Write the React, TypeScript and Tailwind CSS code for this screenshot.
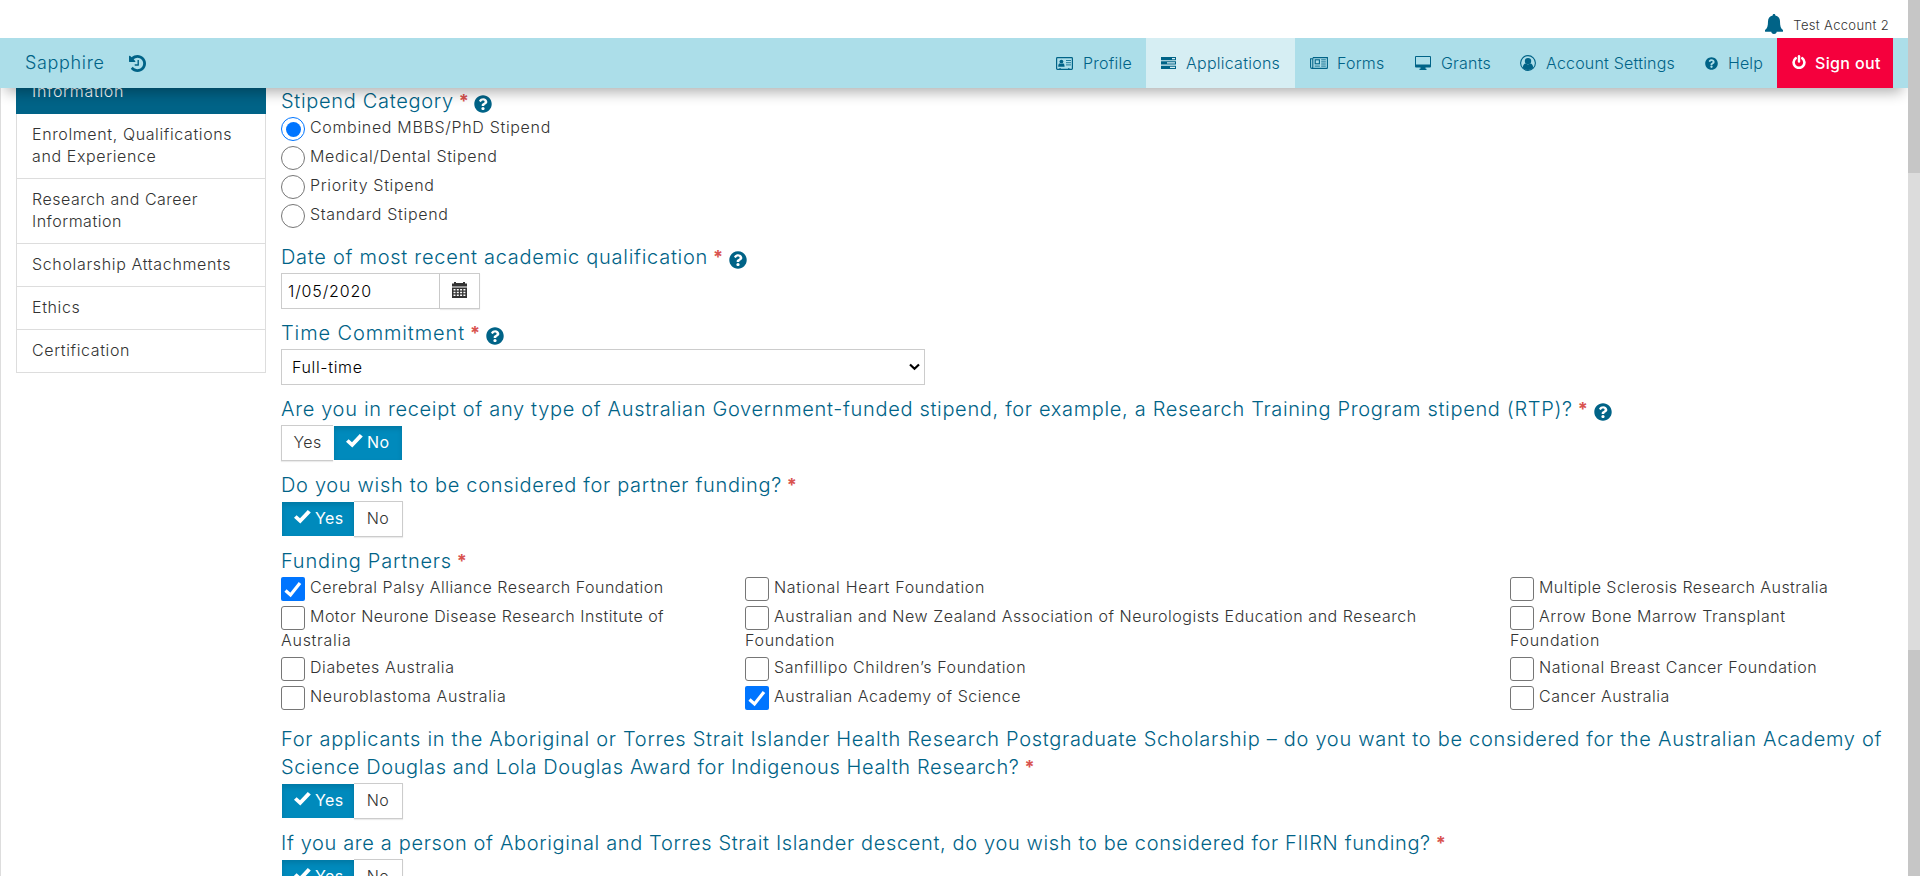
import React from "react";
import { FaQuestionCircle } from "react-icons/fa";

function BellIcon() {
  return (
    <svg width="18" height="20" viewBox="0 0 18 20" className="mt-3.5 shrink-0">
      <path
        fill="#006387"
        d="M9 0c.8 0 1.300.5 1.300 1.200v.3C13.300 2 15 4.200 15 7.500c0 4.500.8 7 3 8.500v1.200q0 .6-.6.6H.6q-.6 0-.6-.6V16c2.200-1.500 3-4 3-8.500C3 4.200 4.700 2 7.700 1.500v-.3C7.700.5 8.200 0 9 0zM6.300 17.500h5.400a2.700 2.400 0 0 1-5.400 0z"
      />
    </svg>
  );
}

function HistoryIcon() {
  return (
    <svg width="17" height="17" viewBox="0 128 1536 1536" className="ml-6 shrink-0">
      <path
        fill="#006387"
        d="M1536 896q0 156-61 298t-164 245-245 164-298 61q-172 0-327-72.500t-264-204.500q-7-10-6.500-22.500t8.500-20.500l137-138q10-9 25-9 16 2 23 12 73 95 179 147t225 52q104 0 198.500-40.500t163.500-109.500 109.500-163.500 40.500-198.500-40.500-198.500-109.500-163.500-163.500-109.500-198.500-40.500q-98 0-188 35.500t-160 101.500l137 138q31 30 14 69-17 40-59 40h-448q-26 0-45-19t-19-45v-448q0-42 40-59 39-17 69 14l130 129q107-101 244.500-156.500t284.500-55.500q156 0 298 61t245 164 164 245 61 298zm-640-288v448q0 14-9 23t-23 9h-320q-14 0-23-9t-9-23v-64q0-14 9-23t23-9h224v-352q0-14 9-23t23-9h64q14 0 23 9t9 23z"
      />
    </svg>
  );
}

function CardIcon() {
  return (
    <svg width="17" height="13" viewBox="0 0 17 13" className="shrink-0">
      <rect x="0.600" y="0.600" width="15.800" height="11.800" rx="0.800" fill="none" stroke="#006387" strokeWidth="1.200" />
      <circle cx="5.400" cy="4.600" r="1.900" fill="#006387" />
      <path fill="#006387" d="M2.200 9.700c0-2 .5-3.200 1.600-3.500 1 .8 2.200.8 3.200 0 1.100.3 1.600 1.500 1.600 3.500zM3.300 11.300h1.500v1H3.300zM12 11.300h1.500v1H12z" />
      <path fill="none" stroke="#006387" strokeWidth="1" strokeOpacity="0.800" d="M10 3.500h5M10 5.700h5M10 7.900h5" />
    </svg>
  );
}

function TasksIcon() {
  return (
    <svg width="15" height="12" viewBox="0 0 15 12" className="shrink-0">
      <path fill="#006387" d="M0 0h15v3.300H0zM0 4.300h15v3.300H0zM0 8.700h15V12H0z" />
      <path fill="#d6eef3" d="M11 1h3v1.200h-3zM6 5.300h8v1.200H6zM9 9.800h5v1.200H9z" />
    </svg>
  );
}

function NewsIcon() {
  return (
    <svg width="18" height="12" viewBox="0 0 18 12" className="shrink-0">
      <path fill="none" stroke="#006387" strokeWidth="1.100" d="M2.800.600h14.600v10.100q0 .7-.7.7H1.900Q.600 11.400.600 10V1.800h2.200V10q0 1.300-1 1.400" />
      <rect x="5.200" y="2.800" width="4.200" height="4" fill="none" stroke="#006387" strokeWidth="1.100" />
      <path fill="none" stroke="#006387" strokeWidth="1" strokeOpacity="0.850" d="M11.200 2.800h4.600M11.200 4.900h4.600M11.200 7h4.600M4.700 9.100h5.200M11.200 9.100h4.600" />
    </svg>
  );
}

function DesktopIcon() {
  return (
    <svg width="16" height="14" viewBox="0 0 16 14" className="shrink-0">
      <path
        fill="#006387"
        fillRule="evenodd"
        d="M1 0h14a1 1 0 0 1 1 1v9.500a1 1 0 0 1-1 1h-4.500v1.200h1V14h-7v-1.300h1v-1.200H1a1 1 0 0 1-1-1V1a1 1 0 0 1 1-1zm0 1v7.500h14V1z"
      />
    </svg>
  );
}

function UserCircleIcon() {
  return (
    <svg width="16" height="16" viewBox="0 0 16 16" className="shrink-0">
      <circle cx="8" cy="8" r="7.400" fill="none" stroke="#006387" strokeWidth="1.100" />
      <circle cx="8" cy="6.100" r="3.200" fill="#006387" />
      <path fill="#006387" d="M2.800 12.400c.3-2.200 1.200-3.600 2.800-3.800 1.400 1.100 3.400 1.100 4.800 0 1.600.2 2.500 1.600 2.800 3.800A6.600 6.600 0 0 1 8 15a6.600 6.600 0 0 1-5.200-2.600z" />
    </svg>
  );
}

function PowerIcon() {
  return (
    <svg width="14" height="14" viewBox="0 0 14 14" className="-mt-0.5 shrink-0">
      <path fill="none" stroke="#fff" strokeWidth="2.600" strokeLinecap="round" d="M3.700 3.200a5.400 5.400 0 1 0 6.600 0" />
      <path fill="none" stroke="#fff" strokeWidth="2.400" strokeLinecap="round" d="M7 1.200v5.300" />
    </svg>
  );
}

function CalendarIcon() {
  return (
    <svg width="15" height="16" viewBox="0 0 15 16">
      <path
        fill="#333"
        fillRule="evenodd"
        d="M0 1.500h2V0h2v1h7V0h2v1.500h2V4.500H0zM0 5.500h15V16H0zM1.500 7v1.500h2V7zm3.300 0v1.500h2V7zm3.300 0v1.500h2V7zm3.300 0v1.500h2V7zM1.500 9.700v1.500h2V9.700zm3.300 0v1.500h2V9.700zm3.300 0v1.500h2V9.700zm3.300 0v1.500h2V9.700zM1.500 12.400v1.500h2v-1.500zm3.300 0v1.500h2v-1.500zm3.300 0v1.500h2v-1.500zm3.300 0v1.500h2v-1.500z"
      />
    </svg>
  );
}

function Tick() {
  return (
    <svg width="17" height="14" viewBox="0 0 17 14" className="mb-0.5 mr-1">
      <path fill="#fff" d="M0 7.800 2.600 5.200 6 8.300 13.800 0 16.800 2.600 6.300 13.600z" />
    </svg>
  );
}

type QuestionProps = { text: string; tail?: string; help?: boolean; track?: string };

function Question({ text, tail, help, track = "tracking-[0.68px]" }: QuestionProps) {
  return (
    <div className={`pb-0.5 text-[20px] leading-7 text-[#006387] ${track}`}>
      {tail && <div className="whitespace-nowrap tracking-[0.7px]">{text}</div>}
      <div className="flex h-7 whitespace-nowrap">
        <span>{tail ?? text}</span>
        <span className="ml-[5px] text-lg font-bold text-[#d9534f]">*</span>
        {help && <FaQuestionCircle className="ml-[5px] mt-2 size-[18px] shrink-0" />}
      </div>
    </div>
  );
}

function Toggle({ value }: { value: "Yes" | "No" }) {
  const on = "my-px flex h-[34px] items-center bg-[#008abc] pb-0.5 text-white font-normal shadow-[inset_0_3px_5px_rgba(0,0,0,0.125)]";
  const off = "flex h-9 items-center justify-center border border-[#ccc] pb-0.5 text-[#333] shadow-[0_1px_1px_rgba(0,0,0,0.08)]";
  return (
    <div className="flex h-9 text-base">
      {value === "Yes" ? (
        <>
          <div className={`${on} ml-px w-[72px] pl-3`}>
            <Tick />
            Yes
          </div>
          <div className={`${off} w-[49px] border-l-0`}>No</div>
        </>
      ) : (
        <>
          <div className={`${off} w-[52px] border-r-0`}>Yes</div>
          <div className={`${on} ml-px w-[68px] pl-3`}>
            <Tick />
            No
          </div>
        </>
      )}
    </div>
  );
}

function Radio({ label, checked }: { label: string; checked?: boolean }) {
  return (
    <div className="flex h-[29px] tracking-[0.67px]">
      {checked ? (
        <span className="flex size-6 items-center justify-center rounded-full border border-[#0075ff]">
          <span className="size-[15px] rounded-full bg-[#0075ff]" />
        </span>
      ) : (
        <span className="size-6 rounded-full border border-[#767676]" />
      )}
      <span className="ml-[5px] leading-5">{label}</span>
    </div>
  );
}

type CheckProps = { label: string; rest?: string; checked?: boolean; track?: string };

function Check({ label, rest, checked, track = "tracking-[0.61px]" }: CheckProps) {
  return (
    <div className={`whitespace-nowrap ${track}`}>
      <div className="flex h-[29px]">
        {checked ? (
          <span className="flex size-6 items-center justify-center rounded-[2px] bg-[#0075ff]">
            <svg width="18" height="17" viewBox="0 0 18 17">
              <path d="M1.500 9.500 6.500 14 16 2" fill="none" stroke="#fff" strokeWidth="3.200" />
            </svg>
          </span>
        ) : (
          <span className="size-6 rounded-[3px] border border-[#767676]" />
        )}
        <span className="ml-[5px] leading-5">{label}</span>
      </div>
      {rest && <div className="-mt-1.5 h-7 leading-[22px] tracking-[0.72px]">{rest}</div>}
    </div>
  );
}

function SideItem({ lines, track = "tracking-[0.62px]" }: { lines: string[]; track?: string }) {
  return (
    <div className={`border border-t-0 border-[#ddd] pb-[11px] pl-[15px] pt-[9px] leading-[22px] ${track}`}>
      {lines.map((l) => (
        <div key={l}>{l}</div>
      ))}
    </div>
  );
}

export default function App() {
  return (
    <div className="flex h-[876px] w-[1920px] overflow-hidden bg-white font-['Inter','Noto_Sans',sans-serif] text-base font-light tracking-[0.35px] text-[#333]">
      <div className="flex w-[1908px] flex-col">
        <header className="z-10 shrink-0">
          <div className="flex h-[38px] items-start justify-end pr-[19px]">
            <BellIcon />
            <span className="ml-2.5 mt-4 text-[13px] leading-[19px] tracking-[0.35px]">Test Account 2</span>
          </div>
          <nav className="flex h-[50px] items-center bg-[#acdee9] pr-[15px] text-[#006387] shadow-[0_10px_14px_-6px_rgba(0,0,0,0.32)]">
            <span className="ml-[25px] text-lg tracking-[0.65px]">Sapphire</span>
            <HistoryIcon />
            <div className="ml-auto flex h-full">
              <div className="flex items-center gap-2.5 pr-3.5">
                <CardIcon />
                <span className="tracking-[0.25px]">Profile</span>
              </div>
              <div className="flex w-[149px] items-center gap-2.5 bg-[#d6eef3] pl-[15px]">
                <TasksIcon />
                <span className="tracking-[0.25px]">Applications</span>
              </div>
              <div className="flex w-[105px] items-center gap-[9px] pl-[15px]">
                <NewsIcon />
                <span className="tracking-[0.2px]">Forms</span>
              </div>
              <div className="flex w-[105px] items-center gap-2.5 pl-[15px]">
                <DesktopIcon />
                <span className="tracking-[0.2px]">Grants</span>
              </div>
              <div className="flex w-[185px] items-center gap-2.5 pl-[15px]">
                <UserCircleIcon />
                <span className="whitespace-nowrap tracking-[0.2px]">Account Settings</span>
              </div>
              <div className="flex w-[87px] items-center gap-2.5 pl-[15px]">
                <FaQuestionCircle className="size-[13px]" />
                <span className="tracking-[0.1px]">Help</span>
              </div>
              <div className="flex w-[116px] items-center gap-[9px] bg-[#f5003d] pl-[15px] font-medium text-white">
                <PowerIcon />
                <span>Sign out</span>
              </div>
            </div>
          </nav>
        </header>

        <div className="flex min-h-0 grow border-l border-[#ddd]">
          <aside className="ml-[15px] w-[250px] shrink-0">
            <div className="h-[26px] overflow-hidden bg-[#006387] pl-4 tracking-[0.72px] text-white">
              <div className="-mt-2 leading-[22px]">Information</div>
            </div>
            <SideItem lines={["Enrolment, Qualifications", "and Experience"]} />
            <SideItem lines={["Research and Career", "Information"]} track="tracking-[0.5px]" />
            <SideItem lines={["Scholarship Attachments"]} track="tracking-[0.65px]" />
            <SideItem lines={["Ethics"]} />
            <SideItem lines={["Certification"]} />
          </aside>

          <main className="ml-[15px] flex grow flex-col">
            <div className="-mt-px">
              <Question text="Stipend Category" help />
              <Radio label="Combined MBBS/PhD Stipend" checked />
              <Radio label="Medical/Dental Stipend" />
              <Radio label="Priority Stipend" />
              <Radio label="Standard Stipend" />
            </div>

            <div className="mt-2.5">
              <Question text="Date of most recent academic qualification" help track="tracking-[0.72px]" />
              <div className="flex h-9">
                <div className="w-[159px] border border-[#ccc] pl-1.5 leading-[34px] tracking-[0.85px] text-black">1/05/2020</div>
                <div className="flex w-10 items-center justify-center border border-l-0 border-[#ccc] pb-0.5 shadow-[0_1px_1px_rgba(0,0,0,0.08)]">
                  <CalendarIcon />
                </div>
              </div>
            </div>

            <div className="mt-2.5">
              <Question text="Time Commitment" help track="tracking-[0.88px]" />
              <div className="flex h-9 w-[644px] items-center justify-between border border-[#ccc] pl-2.5 pr-1 text-black">
                <span className="tracking-[0.65px]">Full-time</span>
                <svg width="11" height="8" viewBox="0 0 11 8">
                  <path d="M1 1.500 5.500 5.800 10 1.500" fill="none" stroke="#000" strokeWidth="2.200" />
                </svg>
              </div>
            </div>

            <div className="mt-2.5">
              <Question
                text="Are you in receipt of any type of Australian Government-funded stipend, for example, a Research Training Program stipend (RTP)?"
                help
                track="tracking-[0.67px]"
              />
              <Toggle value="No" />
            </div>

            <div className="mt-2.5">
              <Question text="Do you wish to be considered for partner funding?" />
              <Toggle value="Yes" />
            </div>

            <div className="mt-2.5">
              <Question text="Funding Partners" track="tracking-[0.76px]" />
              <div className="grid grid-cols-[464px_765px_1fr]">
                <Check label="Cerebral Palsy Alliance Research Foundation" checked track="tracking-[0.5px]" />
                <Check label="National Heart Foundation" track="tracking-[0.7px]" />
                <Check label="Multiple Sclerosis Research Australia" track="tracking-[0.43px]" />
                <Check label="Motor Neurone Disease Research Institute of" rest="Australia" track="tracking-[0.49px]" />
                <Check
                  label="Australian and New Zealand Association of Neurologists Education and Research"
                  rest="Foundation"
                  track="tracking-[0.54px]"
                />
                <Check label="Arrow Bone Marrow Transplant" rest="Foundation" track="tracking-[0.55px]" />
                <Check label="Diabetes Australia" />
                <Check label="Sanfillipo Children’s Foundation" />
                <Check label="National Breast Cancer Foundation" />
                <Check label="Neuroblastoma Australia" track="tracking-[0.64px]" />
                <Check label="Australian Academy of Science" checked track="tracking-[0.53px]" />
                <Check label="Cancer Australia" track="tracking-[0.53px]" />
              </div>
            </div>

            <div className="mt-2.5">
              <Question
                text="For applicants in the Aboriginal or Torres Strait Islander Health Research Postgraduate Scholarship – do you want to be considered for the Australian Academy of"
                tail="Science Douglas and Lola Douglas Award for Indigenous Health Research?"
                track="tracking-[0.62px]"
              />
              <Toggle value="Yes" />
            </div>

            <div className="mt-2.5">
              <Question
                text="If you are a person of Aboriginal and Torres Strait Islander descent, do you wish to be considered for FIIRN funding?"
                track="tracking-[0.64px]"
              />
              <Toggle value="Yes" />
            </div>
          </main>
        </div>
      </div>

      <div className="z-20 flex w-3 shrink-0 flex-col justify-between bg-[#dcdcdc]">
        <div className="h-[173px] bg-[#c6c6c6]" />
        <div className="h-[226px] bg-[#c6c6c6]" />
      </div>
    </div>
  );
}
